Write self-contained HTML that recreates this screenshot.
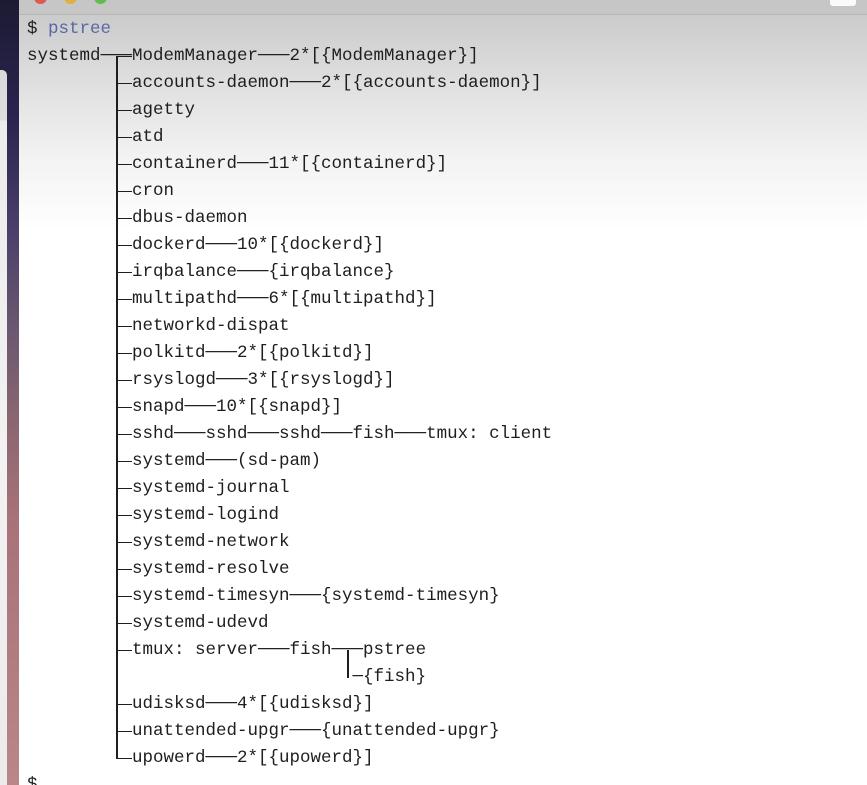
<!DOCTYPE html>
<html><head><meta charset="utf-8"><style>
html,body{margin:0;padding:0;width:867px;height:785px;overflow:hidden;background:#fff}
body{position:relative;font-family:"Liberation Mono","DejaVu Sans Mono",monospace;font-size:17.5px;color:#1e1e1e}
.bg{position:absolute;left:19px;top:0;right:0;height:240px;background:linear-gradient(#c6c6c6 0px,#c6c6c6 14px,#cbcbcb 15px,#e4e4e4 100px,#f3f3f3 160px,#fff 230px)}
.tb{position:absolute;left:19px;top:14px;right:0;height:1px;background:#b5b5b5}
.strip{position:absolute;left:0;top:0;width:19px;height:785px;background:linear-gradient(#1c1a33 0px,#2a2550 120px,#4a3f6a 230px,#6b5870 330px,#8a6670 420px,#a87278 520px,#bb8686 785px)}
.panel{position:absolute;left:0;top:70px;width:7px;height:715px;background:linear-gradient(#d9d9d9 0,#dedede 50px,#ececec 51px,#f2f2f2 400px,#eaeaea 785px);border-top-right-radius:5px}
.dot{position:absolute;top:-9px;width:13px;height:13px;border-radius:50%}
.bub{position:absolute;left:830px;top:-4px;width:26px;height:10px;background:#fafafa;border-radius:3px}
.r{position:absolute;left:27px;height:27px;line-height:27px;white-space:pre}
.s::before{content:"";position:absolute;left:89px;width:16px;top:13px;border-top:1.6px solid #1e1e1e}
.v{position:absolute;background:#1e1e1e;width:1.6px}
.t{position:absolute;left:0;top:3px;width:867px;height:785px}
</style></head><body>
<div class="bg"></div><div class="tb"></div>
<div class="dot" style="left:34px;background:#e0584e"></div>
<div class="dot" style="left:64px;background:#e2b03e"></div>
<div class="dot" style="left:94px;background:#5fbd4e"></div>
<div class="bub"></div>
<div class="strip"></div><div class="panel"></div>
<div class="t">
<div class="v" style="left:116px;top:53px;height:703px"></div>
<div class="v" style="left:347px;top:647px;height:28px"></div>
<div class="r" style="top:13px">$ <span style="color:#5a67a6">pstree</span></div>
<div class="r s" style="top:40px">systemd───ModemManager───2*[{ModemManager}]</div>
<div class="r s" style="top:67px">          accounts-daemon───2*[{accounts-daemon}]</div>
<div class="r s" style="top:94px">          agetty</div>
<div class="r s" style="top:121px">          atd</div>
<div class="r s" style="top:148px">          containerd───11*[{containerd}]</div>
<div class="r s" style="top:175px">          cron</div>
<div class="r s" style="top:202px">          dbus-daemon</div>
<div class="r s" style="top:229px">          dockerd───10*[{dockerd}]</div>
<div class="r s" style="top:256px">          irqbalance───{irqbalance}</div>
<div class="r s" style="top:283px">          multipathd───6*[{multipathd}]</div>
<div class="r s" style="top:310px">          networkd-dispat</div>
<div class="r s" style="top:337px">          polkitd───2*[{polkitd}]</div>
<div class="r s" style="top:364px">          rsyslogd───3*[{rsyslogd}]</div>
<div class="r s" style="top:391px">          snapd───10*[{snapd}]</div>
<div class="r s" style="top:418px">          sshd───sshd───sshd───fish───tmux: client</div>
<div class="r s" style="top:445px">          systemd───(sd-pam)</div>
<div class="r s" style="top:472px">          systemd-journal</div>
<div class="r s" style="top:499px">          systemd-logind</div>
<div class="r s" style="top:526px">          systemd-network</div>
<div class="r s" style="top:553px">          systemd-resolve</div>
<div class="r s" style="top:580px">          systemd-timesyn───{systemd-timesyn}</div>
<div class="r s" style="top:607px">          systemd-udevd</div>
<div class="r s" style="top:634px">          tmux: server───fish───pstree</div>
<div class="r" style="top:661px">                               ─{fish}</div>
<div class="r s" style="top:688px">          udisksd───4*[{udisksd}]</div>
<div class="r s" style="top:715px">          unattended-upgr───{unattended-upgr}</div>
<div class="r s" style="top:742px">          upowerd───2*[{upowerd}]</div>
<div class="r" style="top:769px">$</div>
</div>
</body></html>
